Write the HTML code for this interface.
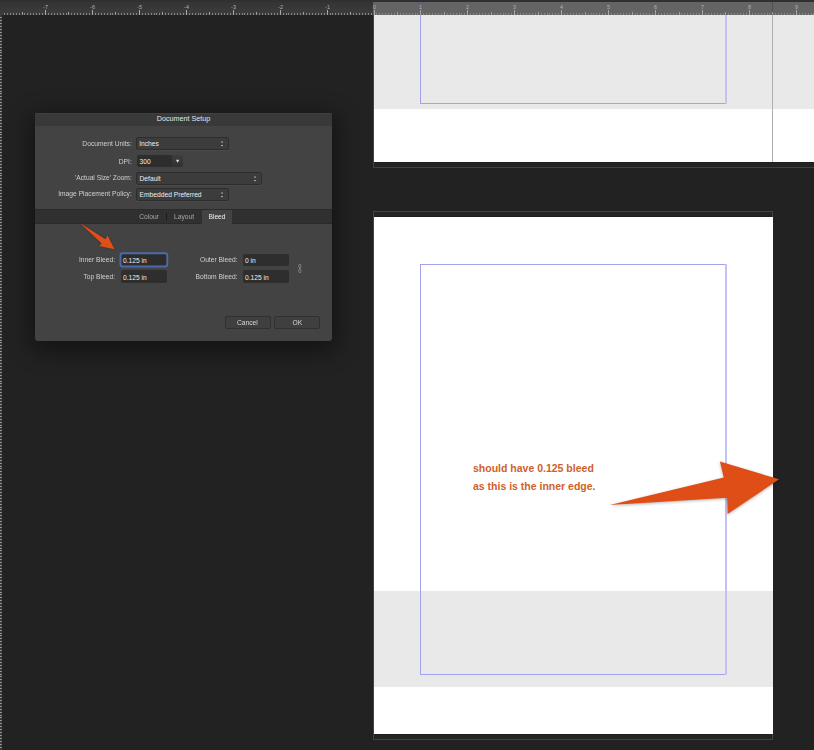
<!DOCTYPE html>
<html><head><meta charset="utf-8">
<style>
*{margin:0;padding:0;box-sizing:border-box}
html,body{width:814px;height:750px;overflow:hidden;background:#222222;font-family:"Liberation Sans",sans-serif}
.a{position:absolute}
#topstrip{left:0;top:0;width:814px;height:2px;background:#303030}
#ruler{left:0;top:2px;width:814px;height:13px;background:linear-gradient(#343434,#3c3c3c)}
#rulerlight{left:373px;top:2px;width:441px;height:13px;background:#646464}
#lruler{left:0;top:15px;width:2px;height:735px;background:repeating-linear-gradient(#3b3b3b 0 2px,#aaaaaa 2px 3px)}
.rsvg{left:0;top:0;width:814px;height:15px}
.rsvg text{font:5.4px "Liberation Sans",sans-serif;fill:#b4b4b4;text-anchor:middle}
.white{background:#fff}
.band{background:#e9e9e9}
.marg{border:1px solid #a2a2f0}
.lbl{position:absolute;font-size:7px;color:#c9c9c9;white-space:nowrap;text-align:right}
.pop{background:#3c3c3c;border:1px solid #2d2d2d;border-radius:2px;box-shadow:0 1px 0 #4a4a4a}
.fld{background:#2e2e2e;border-radius:2px}
.btn{background:#3f3f3f;border:1px solid #303030;border-radius:2px}
.val{position:absolute;font-size:7px;color:#ececec;white-space:nowrap}
</style></head><body>
<div class="a" id="topstrip"></div>
<div class="a" id="ruler"></div>
<div class="a" id="rulerlight"></div>
<div class="a" style="left:420px;top:2px;width:1px;height:13px;background:#5f5f86"></div>
<div class="a" style="left:725px;top:2px;width:1px;height:13px;background:#5f5f86"></div>
<div class="a" style="left:772px;top:2px;width:1px;height:13px;background:#505050"></div>
<svg class="a rsvg" width="814" height="15">
<path d="M4.5 13V15M7.5 13V15M10.5 13V15M13.5 13V15M16.5 13V15M19.5 13V15M24.5 13V15M27.5 13V15M30.5 13V15M33.5 13V15M36.5 13V15M39.5 13V15M42.5 13V15M48.5 13V15M51.5 13V15M54.5 13V15M57.5 13V15M60.5 13V15M63.5 13V15M66.5 13V15M71.5 13V15M74.5 13V15M77.5 13V15M80.5 13V15M83.5 13V15M86.5 13V15M89.5 13V15M95.5 13V15M98.5 13V15M101.5 13V15M104.5 13V15M107.5 13V15M110.5 13V15M112.5 13V15M118.5 13V15M121.5 13V15M124.5 13V15M127.5 13V15M130.5 13V15M133.5 13V15M136.5 13V15M142.5 13V15M145.5 13V15M148.5 13V15M151.5 13V15M154.5 13V15M156.5 13V15M159.5 13V15M165.5 13V15M168.5 13V15M171.5 13V15M174.5 13V15M177.5 13V15M180.5 13V15M183.5 13V15M189.5 13V15M192.5 13V15M195.5 13V15M198.5 13V15M200.5 13V15M203.5 13V15M206.5 13V15M212.5 13V15M215.5 13V15M218.5 13V15M221.5 13V15M224.5 13V15M227.5 13V15M230.5 13V15M236.5 13V15M239.5 13V15M242.5 13V15M244.5 13V15M247.5 13V15M250.5 13V15M253.5 13V15M259.5 13V15M262.5 13V15M265.5 13V15M268.5 13V15M271.5 13V15M274.5 13V15M277.5 13V15M283.5 13V15M286.5 13V15M288.5 13V15M291.5 13V15M294.5 13V15M297.5 13V15M300.5 13V15M306.5 13V15M309.5 13V15M312.5 13V15M315.5 13V15M318.5 13V15M321.5 13V15M324.5 13V15M330.5 13V15M332.5 13V15M335.5 13V15M338.5 13V15M341.5 13V15M344.5 13V15M347.5 13V15M353.5 13V15M356.5 13V15M359.5 13V15M362.5 13V15M365.5 13V15M368.5 13V15M371.5 13V15M376.5 13V15M379.5 13V15M382.5 13V15M385.5 13V15M388.5 13V15M391.5 13V15M394.5 13V15M400.5 13V15M403.5 13V15M406.5 13V15M409.5 13V15M412.5 13V15M415.5 13V15M417.5 13V15M423.5 13V15M426.5 13V15M429.5 13V15M432.5 13V15M435.5 13V15M438.5 13V15M441.5 13V15M447.5 13V15M450.5 13V15M453.5 13V15M456.5 13V15M459.5 13V15M461.5 13V15M464.5 13V15M470.5 13V15M473.5 13V15M476.5 13V15M479.5 13V15M482.5 13V15M485.5 13V15M488.5 13V15M494.5 13V15M497.5 13V15M500.5 13V15M503.5 13V15M505.5 13V15M508.5 13V15M511.5 13V15M517.5 13V15M520.5 13V15M523.5 13V15M526.5 13V15M529.5 13V15M532.5 13V15M535.5 13V15M541.5 13V15M544.5 13V15M547.5 13V15M549.5 13V15M552.5 13V15M555.5 13V15M558.5 13V15M564.5 13V15M567.5 13V15M570.5 13V15M573.5 13V15M576.5 13V15M579.5 13V15M582.5 13V15M588.5 13V15M591.5 13V15M593.5 13V15M596.5 13V15M599.5 13V15M602.5 13V15M605.5 13V15M611.5 13V15M614.5 13V15M617.5 13V15M620.5 13V15M623.5 13V15M626.5 13V15M629.5 13V15M635.5 13V15M637.5 13V15M640.5 13V15M643.5 13V15M646.5 13V15M649.5 13V15M652.5 13V15M658.5 13V15M661.5 13V15M664.5 13V15M667.5 13V15M670.5 13V15M673.5 13V15M676.5 13V15M681.5 13V15M684.5 13V15M687.5 13V15M690.5 13V15M693.5 13V15M696.5 13V15M699.5 13V15M705.5 13V15M708.5 13V15M711.5 13V15M714.5 13V15M717.5 13V15M720.5 13V15M723.5 13V15M728.5 13V15M731.5 13V15M734.5 13V15M737.5 13V15M740.5 13V15M743.5 13V15M746.5 13V15M752.5 13V15M755.5 13V15M758.5 13V15M761.5 13V15M764.5 13V15M767.5 13V15M769.5 13V15M775.5 13V15M778.5 13V15M781.5 13V15M784.5 13V15M787.5 13V15M790.5 13V15M793.5 13V15M799.5 13V15M802.5 13V15M805.5 13V15M808.5 13V15M811.5 13V15M813.5 13V15" stroke="#858585"/>
<path d="M22.5 12V15M68.5 12V15M115.5 12V15M162.5 12V15M209.5 12V15M256.5 12V15M303.5 12V15M350.5 12V15M397.5 12V15M444.5 12V15M491.5 12V15M538.5 12V15M585.5 12V15M632.5 12V15M679.5 12V15M725.5 12V15M772.5 12V15" stroke="#a0a0a0"/>
<path d="M45.5 10V15M92.5 10V15M139.5 10V15M186.5 10V15M233.5 10V15M280.5 10V15M327.5 10V15M374.5 10V15M420.5 10V15M467.5 10V15M514.5 10V15M561.5 10V15M608.5 10V15M655.5 10V15M702.5 10V15M749.5 10V15M796.5 10V15" stroke="#a8a8a8"/>
<text x="45.5" y="9">-7</text><text x="92.5" y="9">-6</text><text x="139.5" y="9">-5</text><text x="186.5" y="9">-4</text><text x="233.5" y="9">-3</text><text x="280.5" y="9">-2</text><text x="327.5" y="9">-1</text><text x="374.5" y="9">0</text><text x="420.5" y="9">1</text><text x="467.5" y="9">2</text><text x="514.5" y="9">3</text><text x="561.5" y="9">4</text><text x="608.5" y="9">5</text><text x="655.5" y="9">6</text><text x="702.5" y="9">7</text><text x="749.5" y="9">8</text><text x="796.5" y="9">9</text>
</svg>
<svg class="a" style="left:0;top:0" width="2" height="750"><rect x="0" y="15" width="2" height="735" fill="#383838"/><path d="M0 17.5H1.7M0 20.5H1.7M0 23.5H1.7M0 26.5H1.7M0 29.5H1.7M0 32.5H1.7M0 35.5H1.7M0 38.5H1.7M0 41.5H1.7M0 44.5H1.7M0 47.5H1.7M0 50.5H1.7M0 52.5H1.7M0 55.5H1.7M0 58.5H1.7M0 61.5H1.7M0 64.5H1.7M0 67.5H1.7M0 70.5H1.7M0 73.5H1.7M0 76.5H1.7M0 79.5H1.7M0 82.5H1.7M0 85.5H1.7M0 88.5H1.7M0 91.5H1.7M0 93.5H1.7M0 96.5H1.7M0 99.5H1.7M0 102.5H1.7M0 105.5H1.7M0 108.5H1.7M0 111.5H1.7M0 114.5H1.7M0 117.5H1.7M0 120.5H1.7M0 123.5H1.7M0 126.5H1.7M0 129.5H1.7M0 132.5H1.7M0 134.5H1.7M0 137.5H1.7M0 140.5H1.7M0 143.5H1.7M0 146.5H1.7M0 149.5H1.7M0 152.5H1.7M0 155.5H1.7M0 158.5H1.7M0 161.5H1.7M0 164.5H1.7M0 167.5H1.7M0 170.5H1.7M0 173.5H1.7M0 175.5H1.7M0 178.5H1.7M0 181.5H1.7M0 184.5H1.7M0 187.5H1.7M0 190.5H1.7M0 193.5H1.7M0 196.5H1.7M0 199.5H1.7M0 202.5H1.7M0 205.5H1.7M0 208.5H1.7M0 211.5H1.7M0 214.5H1.7M0 217.5H1.7M0 219.5H1.7M0 222.5H1.7M0 225.5H1.7M0 228.5H1.7M0 231.5H1.7M0 234.5H1.7M0 237.5H1.7M0 240.5H1.7M0 243.5H1.7M0 246.5H1.7M0 249.5H1.7M0 252.5H1.7M0 255.5H1.7M0 258.5H1.7M0 260.5H1.7M0 263.5H1.7M0 266.5H1.7M0 269.5H1.7M0 272.5H1.7M0 275.5H1.7M0 278.5H1.7M0 281.5H1.7M0 284.5H1.7M0 287.5H1.7M0 290.5H1.7M0 293.5H1.7M0 296.5H1.7M0 299.5H1.7M0 301.5H1.7M0 304.5H1.7M0 307.5H1.7M0 310.5H1.7M0 313.5H1.7M0 316.5H1.7M0 319.5H1.7M0 322.5H1.7M0 325.5H1.7M0 328.5H1.7M0 331.5H1.7M0 334.5H1.7M0 337.5H1.7M0 340.5H1.7M0 342.5H1.7M0 345.5H1.7M0 348.5H1.7M0 351.5H1.7M0 354.5H1.7M0 357.5H1.7M0 360.5H1.7M0 363.5H1.7M0 366.5H1.7M0 369.5H1.7M0 372.5H1.7M0 375.5H1.7M0 378.5H1.7M0 381.5H1.7M0 383.5H1.7M0 386.5H1.7M0 389.5H1.7M0 392.5H1.7M0 395.5H1.7M0 398.5H1.7M0 401.5H1.7M0 404.5H1.7M0 407.5H1.7M0 410.5H1.7M0 413.5H1.7M0 416.5H1.7M0 419.5H1.7M0 422.5H1.7M0 425.5H1.7M0 427.5H1.7M0 430.5H1.7M0 433.5H1.7M0 436.5H1.7M0 439.5H1.7M0 442.5H1.7M0 445.5H1.7M0 448.5H1.7M0 451.5H1.7M0 454.5H1.7M0 457.5H1.7M0 460.5H1.7M0 463.5H1.7M0 466.5H1.7M0 468.5H1.7M0 471.5H1.7M0 474.5H1.7M0 477.5H1.7M0 480.5H1.7M0 483.5H1.7M0 486.5H1.7M0 489.5H1.7M0 492.5H1.7M0 495.5H1.7M0 498.5H1.7M0 501.5H1.7M0 504.5H1.7M0 507.5H1.7M0 509.5H1.7M0 512.5H1.7M0 515.5H1.7M0 518.5H1.7M0 521.5H1.7M0 524.5H1.7M0 527.5H1.7M0 530.5H1.7M0 533.5H1.7M0 536.5H1.7M0 539.5H1.7M0 542.5H1.7M0 545.5H1.7M0 548.5H1.7M0 550.5H1.7M0 553.5H1.7M0 556.5H1.7M0 559.5H1.7M0 562.5H1.7M0 565.5H1.7M0 568.5H1.7M0 571.5H1.7M0 574.5H1.7M0 577.5H1.7M0 580.5H1.7M0 583.5H1.7M0 586.5H1.7M0 589.5H1.7M0 592.5H1.7M0 594.5H1.7M0 597.5H1.7M0 600.5H1.7M0 603.5H1.7M0 606.5H1.7M0 609.5H1.7M0 612.5H1.7M0 615.5H1.7M0 618.5H1.7M0 621.5H1.7M0 624.5H1.7M0 627.5H1.7M0 630.5H1.7M0 633.5H1.7M0 635.5H1.7M0 638.5H1.7M0 641.5H1.7M0 644.5H1.7M0 647.5H1.7M0 650.5H1.7M0 653.5H1.7M0 656.5H1.7M0 659.5H1.7M0 662.5H1.7M0 665.5H1.7M0 668.5H1.7M0 671.5H1.7M0 674.5H1.7M0 676.5H1.7M0 679.5H1.7M0 682.5H1.7M0 685.5H1.7M0 688.5H1.7M0 691.5H1.7M0 694.5H1.7M0 697.5H1.7M0 700.5H1.7M0 703.5H1.7M0 706.5H1.7M0 709.5H1.7M0 712.5H1.7M0 715.5H1.7M0 717.5H1.7M0 720.5H1.7M0 723.5H1.7M0 726.5H1.7M0 729.5H1.7M0 732.5H1.7M0 735.5H1.7M0 738.5H1.7M0 741.5H1.7M0 744.5H1.7M0 747.5H1.7" stroke="#a0a0a0"/></svg>

<!-- page 1 -->
<div class="a" style="left:373px;top:15px;width:441px;height:153px;background:#242424;border-left:1px solid #424242;border-bottom:1px solid #424242"></div>
<div class="a" style="left:374px;top:162px;width:440px;height:1px;background:#1f1f1f"></div>
<div class="a white" style="left:374px;top:15px;width:440px;height:147px"></div>
<div class="a band" style="left:374px;top:15px;width:440px;height:94px"></div>
<div class="a marg" style="left:420px;top:15px;width:307px;height:89px;border-top:none;border-right:none"></div>
<div class="a" style="left:725px;top:15px;width:2px;height:89px;background:#c3c3f2"></div>
<div class="a" style="left:772px;top:15px;width:1px;height:147px;background:#b0b0b0"></div>

<!-- page 2 -->
<div class="a" style="left:373px;top:211px;width:400px;height:529px;background:#242424;border:1px solid #424242"></div>
<div class="a" style="left:374px;top:216px;width:398px;height:1px;background:#1f1f1f"></div>
<div class="a" style="left:374px;top:734px;width:398px;height:1px;background:#1f1f1f"></div>
<div class="a white" style="left:374px;top:217px;width:399px;height:517px"></div>
<div class="a band" style="left:374px;top:591px;width:399px;height:96px"></div>
<div class="a marg" style="left:420px;top:264px;width:307px;height:411px;border-right:none"></div>
<div class="a" style="left:725px;top:264px;width:2px;height:411px;background:#c3c3f2"></div>

<!-- page text -->
<svg class="a" style="left:0;top:0" width="814" height="750">
<g font-family="Liberation Sans" font-weight="bold" font-size="10.5" fill="#d05f2a">
<text x="473" y="472">should have 0.125 bleed</text>
<text x="473" y="490">as this is the inner edge.</text>
</g>
</svg>
<!-- big arrow -->
<svg class="a" style="left:0;top:0" width="814" height="750">
<polygon points="609.8,505 723.8,477.4 719.9,461.6 779.1,479.3 727.6,513.9 727.1,497.8" fill="#df4e17" style="filter:drop-shadow(0 1px 1.5px rgba(0,0,0,.3))"/>
</svg>

<!-- dialog -->
<div class="a" style="left:35px;top:113px;width:297px;height:228px;background:#434343;border-radius:1.5px 1.5px 3px 3px;box-shadow:0 6px 22px 5px rgba(0,0,0,.42);overflow:hidden">
  <div class="a" style="left:0;top:0;width:297px;height:13px;background:#393939;border-top:1px solid #404040"></div>
  <div class="a" style="left:0;top:96px;width:297px;height:15px;background:#303030;border-top:1px solid #2a2a2a;border-bottom:1px solid #2a2a2a"></div>
  <div class="a" style="left:167px;top:97px;width:30px;height:14px;background:#434343"></div>
</div>
<!-- popups -->
<div class="a pop" style="left:136px;top:137px;width:93px;height:13px"></div>
<div class="a pop" style="left:136px;top:172px;width:126px;height:13px"></div>
<div class="a pop" style="left:136px;top:188px;width:93px;height:13px"></div>
<div class="a" style="left:137px;top:155px;width:35px;height:12px;background:#2d2d2d;border-radius:2px 0 0 2px"></div>
<div class="a" style="left:172px;top:155px;width:11px;height:12px;background:linear-gradient(#3d3d3d,#313131);border-radius:0 2px 2px 0"></div>
<!-- fields -->
<svg class="a" style="left:0;top:0" width="814" height="750"><rect x="120.5" y="253.3" width="46.8" height="13.2" rx="2.2" fill="#2d2d2d" stroke="#4d6bab" stroke-width="1.9"/></svg>
<div class="a fld" style="left:121px;top:270px;width:46px;height:13px"></div>
<div class="a fld" style="left:243px;top:254px;width:46px;height:12px"></div>
<div class="a fld" style="left:243px;top:270px;width:46px;height:13px"></div>
<!-- buttons -->
<div class="a btn" style="left:225px;top:316px;width:46px;height:13px"></div>
<div class="a btn" style="left:274px;top:316px;width:46px;height:13px"></div>

<svg class="a" style="left:0;top:0" width="814" height="750">

<g font-family="Liberation Sans" font-size="6.7" fill="#ececec">
<text x="139.2" y="146">Inches</text>
<text x="139.5" y="163.6">300</text>
<text x="139.5" y="181">Default</text>
<text x="139.5" y="196.7">Embedded Preferred</text>
<text x="123" y="262.7">0.125 in</text>
<text x="123" y="279.7">0.125 in</text>
<text x="245" y="262.5">0 in</text>
<text x="245" y="279.5">0.125 in</text>
</g>

<text x="183.5" y="121.4" font-family="Liberation Sans" font-size="7.2" fill="#e6e6e6" text-anchor="middle">Document Setup</text>
<rect x="166" y="213" width="1" height="7" fill="#1c1c1c"/>
<!-- popup indicators -->
<g fill="#d8d8d8">
<path d="M221 142.5l1-1.5 1 1.5z M221 145l1 1.5 1-1.5z"/>
<path d="M254 177.5l1-1.5 1 1.5z M254 180l1 1.5 1-1.5z"/>
<path d="M221 193.5l1-1.5 1 1.5z M221 196l1 1.5 1-1.5z"/>
<path d="M175.8 159.8h3.6l-1.8 3z"/>
</g>
<!-- chain -->
<g fill="none" stroke="#a8a8a8" stroke-width="0.6">
<rect x="298.7" y="264.3" width="2.2" height="3.4" rx="1.1"/>
<rect x="298.7" y="269.2" width="2.2" height="3.4" rx="1.1"/>
<path d="M299.8 267.4v2.1"/>
</g>
<!-- small arrow -->
<polygon points="80,223 105.4,239.3 107.6,235.6 114.6,249.3 99.1,246 101.7,243.4" fill="#e04f17" style="filter:drop-shadow(0 0.5px 1px rgba(0,0,0,.3))"/>
</svg>
<svg class="a" style="left:0;top:0;will-change:transform" width="814" height="750">
<g font-family="Liberation Sans" font-size="6.7" fill="#d0d0d0" text-anchor="end">
<text x="131.8" y="146">Document Units:</text>
<text x="131.8" y="163.6">DPI:</text>
<text x="131.8" y="180">'Actual Size' Zoom:</text>
<text x="131.8" y="196">Image Placement Policy:</text>
<text x="115" y="262">Inner Bleed:</text>
<text x="115" y="279">Top Bleed:</text>
<text x="237.5" y="262">Outer Bleed:</text>
<text x="237.5" y="279">Bottom Bleed:</text>
</g>
<g font-family="Liberation Sans" font-size="6.7" text-anchor="middle">
<text x="149" y="219" fill="#a8a8a8">Colour</text>
<text x="184" y="219" fill="#a8a8a8">Layout</text>
<text x="217" y="219" fill="#f0f0f0">Bleed</text>
<text x="247.3" y="325" fill="#d8d8d8">Cancel</text>
<text x="297.3" y="325" fill="#d8d8d8">OK</text>
</g>
</svg>
</body></html>
